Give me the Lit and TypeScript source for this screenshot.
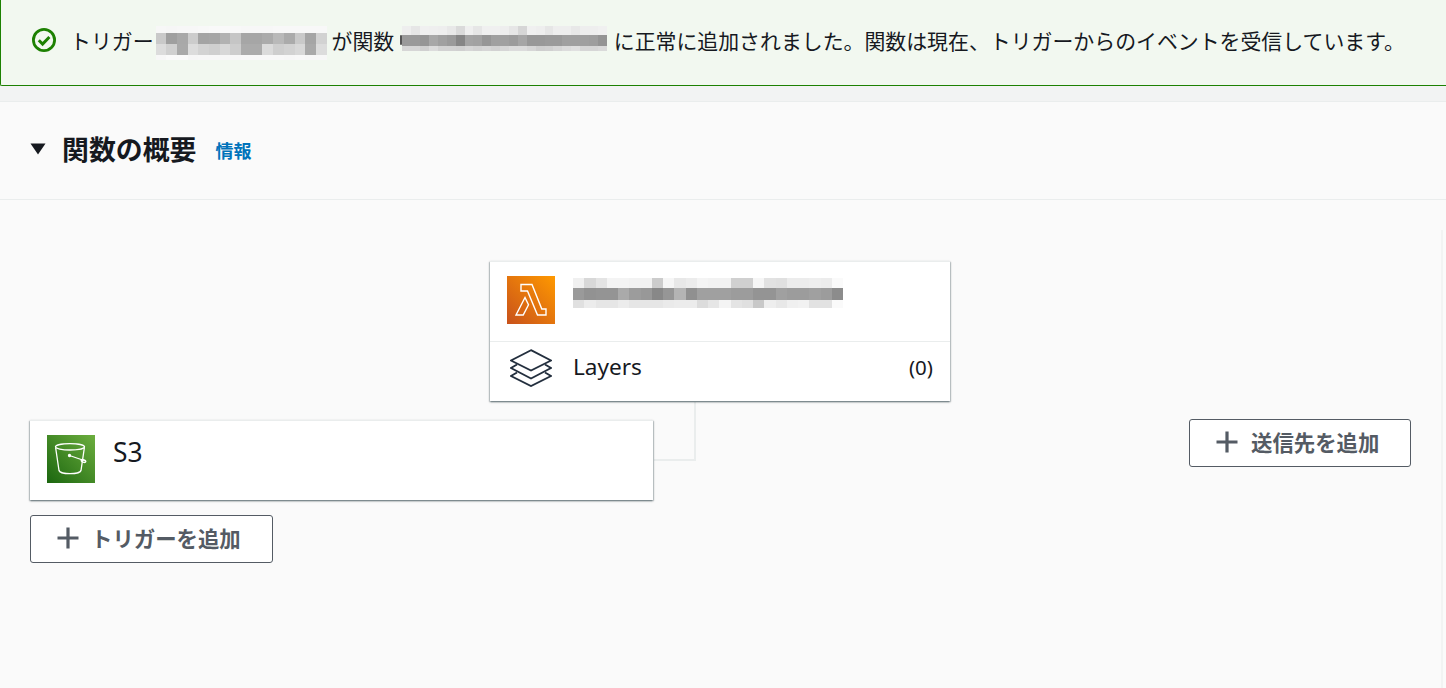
import { LitElement, html, css, svg } from "lit";
import { customElement } from "lit/decorators.js";

const M1 = {
  cw: 10.7,
  rows: [
    { h: 7, g: "f7 f6 f7 f7 f8 f9 f9 f8 f7 f7 f7 f8 f8 f8 f8 f8" },
    { h: 11, g: "c9 9f a8 cc a4 a6 b2 c5 a6 a6 ab b9 ab c9 a5 d2" },
    { h: 11, g: "dc d0 a9 dc d3 cf d8 cd ab ab db ce d2 d8 a9 dc" },
    { h: 5, g: "f7 fa fa f6 f7 f7 f7 f7 f8 f8 f8 f8 f7 f8 f7 f7" },
  ],
};
const M2 = {
  cw: 8.9,
  rows: [
    { h: 9, g: "ee e6 f0 ef ee e8 da ef e6 f0 f0 ee e6 d6 f0 ee e6 ee ee e8 ee ee f0" },
    { h: 11, g: "9a 9a 96 a8 a0 9a 86 a4 a2 96 a0 a0 9c a6 98 98 9a 9a a0 a0 a0 9e 94" },
    { h: 5, g: "d6 d6 d0 dc d2 d2 d0 d6 d2 d6 d2 d6 dc dc d6 ce d0 d6 dc e0 d6 d6 da" },
  ],
};
const M3 = {
  cw: 11.25,
  rows: [
    { h: 10, g: "f0 d8 e4 f4 f4 f2 f2 cc f6 e8 ec f4 f2 f2 d0 d0 f6 e2 e0 ec ec ee ec fa" },
    { h: 12, g: "9a 92 94 94 aa 9c 98 88 96 b4 90 a0 a0 a0 9c 9c 94 94 a0 9c 9c a0 9c 8c" },
    { h: 8, g: "e0 ec e6 e6 ec e6 e6 e6 ea ec ec dc e6 f4 e4 e0 c8 ee e8 f0 f2 e2 e2 fa" },
  ],
};

type Mosaic = typeof M1;

const plus = html`<svg class="plus" viewBox="0 0 22 22" width="22" height="22" aria-hidden="true">
  <path d="M11 0.5V21.5M0.5 11H21.5" fill="none" stroke="#545b64" stroke-width="3.2" />
</svg>`;

@customElement("app-root")
export class AppRoot extends LitElement {
  static styles = css`
    :host {
      display: block;
      font-family: "Noto Sans CJK JP", "Noto Sans", sans-serif;
      color: #16191f;
    }
    .page {
      display: flex;
      flex-direction: column;
      height: 688px;
      overflow: hidden;
      background: #fafafa;
    }
    .banner {
      box-sizing: border-box;
      height: 86px;
      flex: none;
      display: flex;
      align-items: center;
      padding: 0 0 6px 31px;
      background: #f2f8f0;
      border-left: 1px solid #1d8102;
      border-bottom: 1px solid #1d8102;
      border-bottom-left-radius: 2px;
      font-size: 20.9px;
      line-height: 30px;
      white-space: nowrap;
    }
    .check {
      flex: none;
      margin-right: 14px;
    }
    .m-first {
      margin-top: 6px;
      margin-left: 2px;
    }
    .m-second {
      margin-bottom: 3px;
    }
    .t-gap1 {
      margin-left: 5px;
    }
    .frag {
      flex: none;
      width: 2px;
      height: 10px;
      margin-left: 6px;
      border-radius: 1px;
      background: #555;
    }
    .t-gap2 {
      margin-left: 7px;
    }
    .mosaic {
      flex: none;
      display: flex;
      flex-direction: column;
    }
    .m-row {
      display: flex;
    }
    .m-cell {
      flex: none;
    }
    .spacer {
      flex: none;
      height: 15px;
      background: #f2f3f3;
      border-bottom: 1px solid #eaeded;
    }
    .head {
      box-sizing: border-box;
      flex: none;
      height: 98px;
      display: flex;
      align-items: center;
      padding: 0 0 3px 30px;
      border-bottom: 1px solid #eaeded;
    }
    .caret {
      margin-right: 16px;
      flex: none;
    }
    h2 {
      margin: 0;
      font-size: 26.9px;
      line-height: 36px;
      font-weight: 700;
    }
    .info {
      margin-left: 19px;
      margin-top: 2px;
      font-size: 18px;
      line-height: 24px;
      font-weight: 700;
      color: #0073bb;
      text-decoration: none;
    }
    .canvas {
      position: relative;
      flex: 1;
    }
    .rail {
      position: absolute;
      right: 3px;
      top: 30px;
      bottom: 0;
      width: 2px;
      background: #f2f3f3;
    }
    .card {
      position: absolute;
      background: #fff;
      border-top: 1px solid #eaeded;
      box-sizing: border-box;
      box-shadow: 0 1px 2px 0 rgba(0, 28, 36, 0.5), 1px 1px 1px 0 rgba(0, 28, 36, 0.12),
        -1px 1px 1px 0 rgba(0, 28, 36, 0.12);
    }
    .fn {
      left: 490px;
      top: 61px;
      width: 460px;
      height: 140px;
      display: flex;
      flex-direction: column;
    }
    .fn-top {
      box-sizing: border-box;
      height: 80px;
      flex: none;
      display: flex;
      align-items: flex-start;
      gap: 18px;
      padding: 14px 0 0 17px;
      border-bottom: 1px solid #eaeded;
    }
    .fn-top .mosaic {
      margin-top: 2px;
    }
    .fn-bot {
      flex: 1;
      display: flex;
      align-items: center;
      padding: 0 17px 10px 20px;
      font-family: "Noto Sans", sans-serif;
      font-size: 22.6px;
      font-weight: 450;
      line-height: 30px;
    }
    .fn-bot svg {
      margin-top: 2px;
    }
    .fn-bot .name {
      margin-left: 21px;
      flex: 1;
    }
    .fn-bot .count {
      font-size: 20.5px;
    }
    .s3 {
      left: 30px;
      top: 220px;
      width: 623px;
      height: 80px;
      display: flex;
      align-items: flex-start;
      gap: 18px;
      padding: 14px 0 0 17px;
    }
    .s3 .name {
      font-family: "Noto Sans", sans-serif;
      font-size: 26.4px;
      font-weight: 450;
      line-height: 34px;
    }
    .btn {
      position: absolute;
      box-sizing: border-box;
      height: 48px;
      display: flex;
      align-items: center;
      gap: 13px;
      background: #fff;
      border: 1px solid #545b64;
      border-radius: 3px;
      color: #545b64;
      font: 700 21.4px/28px "Noto Sans CJK JP", sans-serif;
      white-space: nowrap;
    }
    .btn-trigger {
      left: 30px;
      top: 315px;
      width: 243px;
      padding: 0 0 2px 26px;
      gap: 12px;
    }
    .btn-dest {
      left: 1189px;
      top: 219px;
      width: 222px;
      padding: 0 0 2px 26px;
      gap: 13px;
    }
    .wire {
      position: absolute;
      left: 654px;
      top: 202px;
      width: 40px;
      height: 57px;
      border-right: 2px solid #eaeded;
      border-bottom: 2px solid #eaeded;
    }
  `;

  private mosaic(m: Mosaic, bg: string, cls = "") {
    return html`<div class="mosaic ${cls}" style="background:${bg}">
      ${m.rows.map(
        (r) => html`<div class="m-row">
          ${r.g.split(" ").map(
            (c) =>
              html`<div
                class="m-cell"
                style="width:${m.cw}px;height:${r.h}px;background:#${c}${c}${c}"
              ></div>`
          )}
        </div>`
      )}
    </div>`;
  }

  private lambdaIcon() {
    return svg`<svg viewBox="0 0 48 48" width="48" height="48" aria-hidden="true" style="flex:none">
      <defs>
        <linearGradient id="lg" x1="0" y1="1" x2="1" y2="0">
          <stop offset="0" stop-color="#c8511b" />
          <stop offset="1" stop-color="#ff9900" />
        </linearGradient>
      </defs>
      <rect width="48" height="48" fill="url(#lg)" />
      <path d="M14 8.5H25L34.8 33H39V39H30.5L20.5 15H14Z M18 21.5L21.5 28.8L16.2 39H9Z"
        fill="none" stroke="#fff" stroke-width="1.4" stroke-linejoin="miter" />
    </svg>`;
  }

  private bucketIcon() {
    return svg`<svg viewBox="0 0 48 48" width="48" height="48" aria-hidden="true" style="flex:none">
      <defs>
        <linearGradient id="bg" x1="0" y1="1" x2="1" y2="0">
          <stop offset="0" stop-color="#1b660f" />
          <stop offset="1" stop-color="#6cae3e" />
        </linearGradient>
      </defs>
      <rect width="48" height="48" fill="url(#bg)" />
      <g fill="none" stroke="#fff" stroke-width="1.3">
        <ellipse cx="23" cy="11.8" rx="14.5" ry="3.2" />
        <path d="M8.6 12.5L12 35.5C12.4 37.5 18 38.6 23 38.6S33.6 37.5 34 35.5L37.4 12.5" />
        <path d="M22.5 20.5L38.5 26" />
        <ellipse cx="36.5" cy="26" rx="2.4" ry="1.2" transform="rotate(20 36.5 26)" />
        <circle cx="22.5" cy="20.5" r="1" fill="#fff" />
      </g>
    </svg>`;
  }

  private layersIcon() {
    return svg`<svg viewBox="0 0 42 38" width="42" height="38" aria-hidden="true" style="flex:none">
      <g fill="none" stroke="#232f3e" stroke-width="1.9" stroke-linejoin="miter">
        <path d="M21 1.2L41 11.5L21 21.5L1 11.5Z" />
        <path d="M7 15.5L1 19L21 29.5L41 19L35 15.5" />
        <path d="M7 23.5L1 27L21 37L41 27L35 23.5" />
      </g>
    </svg>`;
  }

  render() {
    return html`<div class="page">
      <div class="banner">
        <svg class="check" viewBox="0 0 24 24" width="24" height="24" aria-hidden="true">
          <circle cx="12" cy="12" r="10.6" fill="none" stroke="#1d8102" stroke-width="2.8" />
          <path d="M6.8 12.2L10.6 16L17.4 9" fill="none" stroke="#1d8102" stroke-width="3" />
        </svg>
        <span>トリガー</span>
        ${this.mosaic(M1, "#f8fbf6", "m-first")}
        <span class="t-gap1">が関数</span>
        <span class="frag"></span>
        ${this.mosaic(M2, "#eeeeee", "m-second")}
        <span class="t-gap2">に正常に追加されました。関数は現在、トリガーからのイベントを受信しています。</span>
      </div>
      <div class="spacer"></div>
      <div class="head">
        <svg class="caret" viewBox="0 0 16 12" width="16" height="12" aria-hidden="true">
          <path d="M0.5 0.5H15.5L8 11.5Z" fill="#16191f" />
        </svg>
        <h2>関数の概要</h2>
        <a class="info" href="#">情報</a>
      </div>
      <div class="canvas">
        <div class="rail"></div>
        <div class="wire"></div>
        <div class="card fn">
          <div class="fn-top">${this.lambdaIcon()} ${this.mosaic(M3, "#ffffff")}</div>
          <div class="fn-bot">
            ${this.layersIcon()}
            <span class="name">Layers</span>
            <span class="count">(0)</span>
          </div>
        </div>
        <div class="card s3">
          ${this.bucketIcon()}
          <span class="name">S3</span>
        </div>
        <div class="btn btn-trigger">${plus}<span>トリガーを追加</span></div>
        <div class="btn btn-dest">${plus}<span>送信先を追加</span></div>
      </div>
    </div>`;
  }
}
